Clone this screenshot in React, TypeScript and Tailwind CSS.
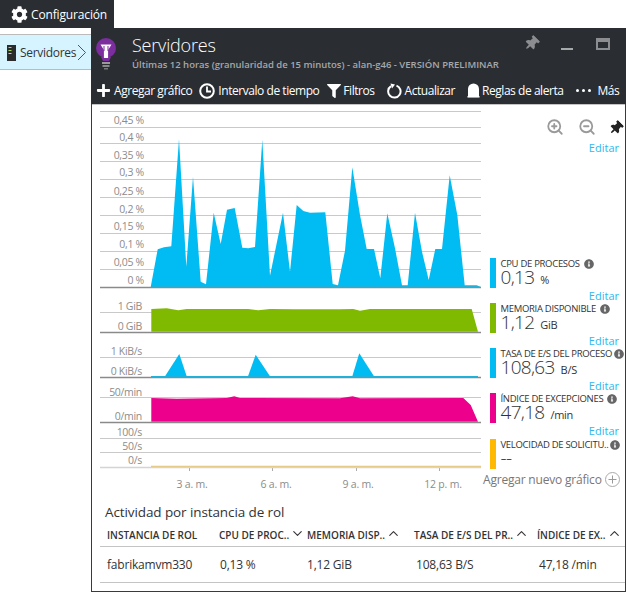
import React from "react";
import { FaCog, FaPlus, FaFilter, FaThumbtack, FaInfoCircle } from "react-icons/fa";
import { ZoomIn, ZoomOut, ChevronDown, ChevronUp } from "lucide-react";

const z3 = (p: number[][]) => p.map(([x, y]) => [100 + x / 3, 105 + y / 3]);
const z4 = (p: number[][]) => p.map(([x, y]) => [340 + x / 3, 105 + y / 3]);
const z5 = (p: number[][]) => p.map(([x, y]) => [100 + x / 3, 285 + y / 3]);
const z6 = (p: number[][]) => p.map(([x, y]) => [340 + x / 3, 285 + y / 3]);
const pts = (p: number[][]) => p.map(([x, y]) => `${x.toFixed(1)},${y.toFixed(1)}`).join(" ");

const cpu = [
  ...z3([[152,546],[173,433],[192,427],[214,424],[237,102],[259,485],[279,215],[302,530],[318,538],[341,323],[362,417],[381,314],[404,309],[427,428],[445,430],[465,426],[487,104],[510,512],[549,323],[570,500],[590,300],[610,318],[630,323],[676,322],[698,537],[714,541],[735,437],[757,187]]),
  ...z4([[60,330],[80,432],[102,432],[121,520],[142,325],[165,430],[186,541],[203,541],[225,323],[246,440],[266,525],[286,432],[306,432],[329,211],[352,330],[374,541],[410,541],[423,546]]),
];
const mem = [
  ...z5([[154,140],[154,72],[200,70],[235,76],[260,72],[445,72],[475,76],[510,72],[585,73],[720,73]]),
  ...z6([[40,72],[60,77],[90,72],[395,72],[414,140]]),
];
const exc = [
  ...z5([[154,410],[154,339],[230,341],[380,339],[403,334],[420,339],[720,340]]),
  ...z6([[38,334],[60,340],[370,339],[392,360],[414,410]]),
];
const tris = [
  z5([[195,274],[238,207],[260,274]]),
  z5([[444,274],[467,209],[510,274]]),
  z6([[37,274],[58,205],[102,274]]),
];

const GRID = "#c9c9c9";
const LABEL = "#8c8c8c";

function Chart({ y0, y1, grid, axis, axisColor = "#8a8a8a", labelX = 142, labels, children }: { y0: number; y1: number; grid: number[]; axis: number; axisColor?: string; labelX?: number; labels: [string, number][]; children?: React.ReactNode }) {
  return (
    <svg width={382} height={y1 - y0} viewBox={`100 ${y0} 382 ${y1 - y0}`} className="block shrink-0">
      {grid.map((y) => (
        <line key={y} x1={100} x2={481} y1={y} y2={y} stroke={GRID} strokeWidth={1} />
      ))}
      {children}
      <line x1={100} x2={481} y1={axis} y2={axis} stroke={axisColor} strokeWidth={1.5} />
      {labels.map(([t, y]) => (
        <text key={t} x={labelX} y={y} textAnchor="end" fontSize={10.5} fill={LABEL} fontFamily="'Open Sans', sans-serif" letterSpacing="-0.3">
          {t}
        </text>
      ))}
    </svg>
  );
}

function Charts() {
  return (
    <div className="flex flex-col">
      <Chart
        y0={106}
        y1={289}
        grid={[111.5, 127.5, 143.5, 161.5, 179.5, 197.5, 215.5, 233.5, 251.5, 269.5]}
        axis={287.5}
        labelX={144}
        labels={[["0,45 %", 123.5], ["0,4 %", 141], ["0,35 %", 159], ["0,3 %", 176], ["0,25 %", 194.5], ["0,2 %", 212.5], ["0,15 %", 230], ["0,1 %", 248], ["0,05 %", 266], ["0 %", 284]]}
      >
        <polygon points={pts(cpu)} fill="#00bcf2" />
      </Chart>
      <Chart y0={289} y1={334} grid={[312.5]} axis={332.5} labels={[["1 GiB", 309.5], ["0 GiB", 329.5]]}>
        <polygon points={pts(mem)} fill="#7fba00" />
      </Chart>
      <Chart y0={334} y1={379} grid={[357.5]} axis={377.5} labels={[["1 KiB/s", 354.5], ["0 KiB/s", 374.5]]}>
        {tris.map((t, i) => (
          <polygon key={i} points={pts(t)} fill="#00bcf2" />
        ))}
        <line x1={151} x2={478} y1={376.5} y2={376.5} stroke="#00bcf2" strokeWidth={1} />
      </Chart>
      <Chart y0={379} y1={424} grid={[397.5]} axis={422.5} labels={[["50/min", 395.5], ["0/min", 419.5]]}>
        <polygon points={pts(exc)} fill="#ec008c" />
      </Chart>
      <Chart y0={424} y1={492} grid={[438.5, 452.5]} axis={467.5} axisColor="#d4d4d4" labels={[["100/s", 435.5], ["50/s", 449.5], ["0/s", 464]]}>
        <line x1={151} x2={481} y1={466.5} y2={466.5} stroke="#ecc76e" strokeWidth={1.5} />
        {[189.5, 272.5, 356.5, 439.5].map((x) => (
          <line key={x} x1={x} x2={x} y1={467} y2={471} stroke="#aaa" strokeWidth={1} />
        ))}
        {([["3 a. m.", 192], ["6 a. m.", 276], ["9 a. m.", 358], ["12 p. m.", 443]] as [string, number][]).map(([t, x]) => (
          <text key={t} x={x} y={488} textAnchor="middle" fontSize={10.5} fill={LABEL} fontFamily="'Open Sans', sans-serif" letterSpacing="-0.2">
            {t}
          </text>
        ))}
      </Chart>
    </div>
  );
}

function Editar({ h = "h-[15px]" }: { h?: string }) {
  return <div className={`${h} flex items-center justify-end pb-[1px] pr-[6px] text-[11px] leading-none text-[#2bb8ee]`}>Editar</div>;
}

function Metric({ color, title, value, unit, icon = "ml-1", unitGap = "ml-[6px]" }: { color: string; title: string; value: string; unit: string; icon?: string; unitGap?: string }) {
  return (
    <div className="flex h-[30px] pl-[8px]">
      <div className="h-[30px] w-[5.5px] shrink-0" style={{ background: color }} />
      <div className="ml-[5px] flex min-w-0 flex-col">
        <div className="flex h-[11px] items-center whitespace-nowrap text-[9.5px] leading-none tracking-[-0.3px] text-[#333]">
          <span>{title}</span>
          <FaInfoCircle className={`${icon} shrink-0 text-[#666]`} size={10} />
        </div>
        <div className="-mt-[1px] flex h-[18px] items-baseline whitespace-nowrap leading-none text-[#333]">
          <span className="text-[19px] font-light tracking-[-0.7px]">{value}</span>
          <span className={`${unitGap} text-[11px] tracking-[-0.3px]`}>{unit}</span>
        </div>
      </div>
    </div>
  );
}

function Legend() {
  return (
    <div className="flex w-[143px] flex-col">
      <div className="flex h-[30px] items-end justify-end">
        <ZoomIn size={18} strokeWidth={2.4} className="text-[#9a9a9a]" />
        <ZoomOut size={18} strokeWidth={2.4} className="ml-[14px] text-[#9a9a9a]" />
        <FaThumbtack size={14} className="mb-[1px] ml-[13px] mr-[2px] rotate-45 text-[#222]" />
      </div>
      <div className="h-[122px] pt-[4px]">
        <Editar />
      </div>
      <Metric color="#00bcf2" title="CPU DE PROCESOS" value="0,13" unit="%" />
      <Editar />
      <Metric color="#7fba00" title="MEMORIA DISPONIBLE" value="1,12" unit="GiB" />
      <Editar />
      <Metric color="#00bcf2" title="TASA DE E/S DEL PROCESO" value="108,63" unit="B/S" icon="ml-[2px]" />
      <Editar />
      <Metric color="#ec008c" title="ÍNDICE DE EXCEPCIONES" value="47,18" unit="/min" />
      <Editar h="h-[16px]" />
      <Metric color="#ffb900" title="VELOCIDAD DE SOLICITU.." value="--" unit="" icon="ml-[2px]" />
      <div className="flex h-[21px] items-center whitespace-nowrap pl-[1px] text-[12px] tracking-[-0.2px] text-[#777]">
        <span>Agregar nuevo gráfico</span>
        <svg width="15" height="15" viewBox="0 0 15 15" className="ml-[3px]">
          <circle cx="7.5" cy="7.5" r="7" fill="none" stroke="#aaa" />
          <path d="M7.5 3.5v8M3.5 7.5h8" stroke="#999" />
        </svg>
      </div>
    </div>
  );
}

function Bulb() {
  return (
    <svg width="22" height="33" viewBox="0 0 22 33" className="shrink-0">
      <circle cx="11" cy="11" r="10" fill="#7c2d9e" />
      <path d="M6 20h10l-2 4H8z" fill="#7c2d9e" />
      <path d="M5.5 7.5h11l-3.4 5.5v8h-4.2v-8z" fill="#fff" />
      <path d="M9 9v5M13 9v5" stroke="#7c2d9e" strokeWidth="1" />
      <rect x="7" y="25" width="8" height="2" fill="#9a9a9a" />
      <rect x="7.5" y="28" width="7" height="2" fill="#8a8a8a" />
      <rect x="9" y="31" width="4" height="1.5" fill="#777" />
    </svg>
  );
}

function Tool({ icon, label, cls }: { icon: React.ReactNode; label: string; cls: string }) {
  return (
    <div className={`flex items-center ${cls}`}>
      {icon}
      <span className="whitespace-nowrap text-[12px] tracking-[-0.45px] text-white">{label}</span>
    </div>
  );
}

function Header() {
  return (
    <div className="h-[76px] bg-[#2a2e33]">
      <div className="flex h-[49px]">
        <div className="ml-[4px] mt-[9px]">
          <Bulb />
        </div>
        <div className="ml-[15px] min-w-0 pt-[4px]">
          <div className="text-[18px] font-light leading-[26px] tracking-[-0.2px] text-white">Servidores</div>
          <div className="whitespace-nowrap text-[9.5px] font-semibold leading-[14px] tracking-[0px] text-[#a6a8aa]">
            Últimas 12 horas (granularidad de 15 minutos) - alan-g46 - VERSIÓN PRELIMINAR
          </div>
        </div>
        <div className="ml-auto flex items-start pr-[16px] pt-[8px]">
          <FaThumbtack size={15} className="rotate-45 text-[#8b8d90]" />
          <div className="ml-[22px] mt-[12px] h-[2px] w-[12px] bg-[#a6a8aa]" />
          <div className="ml-[23px] mt-[2px] h-[12px] w-[14px] border-2 border-t-[4px] border-[#8b8d90]" />
        </div>
      </div>
      <div className="flex h-[27px] items-center">
        <Tool cls="ml-[5px]" icon={<FaPlus size={15} className="mr-[3px] text-white" />} label="Agregar gráfico" />
        <Tool
          cls="ml-[7px]"
          icon={
            <svg width="16" height="16" viewBox="0 0 16 16" className="mr-[3px]">
              <circle cx="8" cy="8" r="6.8" fill="none" stroke="#fff" strokeWidth="2" />
              <path d="M8 3.5V8.5H12" fill="none" stroke="#fff" strokeWidth="1.8" />
            </svg>
          }
          label="Intervalo de tiempo"
        />
        <Tool cls="ml-[8px]" icon={<FaFilter size={14} className="mr-[2px] text-white" />} label="Filtros" />
        <Tool
          cls="ml-[11px]"
          icon={
            <svg width="16" height="16" viewBox="0 0 16 16" className="mr-[3px]">
              <path d="M5 3.2A6.2 6.2 0 1 0 10.5 2.6" fill="none" stroke="#fff" strokeWidth="2" />
              <path d="M4.5 0.5L9 1.5 6 5.5z" fill="#fff" />
            </svg>
          }
          label="Actualizar"
        />
        <Tool
          cls="ml-[12px]"
          icon={
            <svg width="13" height="16" viewBox="0 0 13 16" className="mr-[2px]">
              <path d="M1 13V6a5.5 5.5 0 0 1 11 0v7l1 1H0z" fill="#fff" />
              <path d="M0.5 14.5h12" stroke="#e58a7a" strokeWidth="1" />
            </svg>
          }
          label="Reglas de alerta"
        />
        <div className="ml-[13px] flex items-center">
          <span className="mr-[3px] h-[3px] w-[3px] rounded-full bg-white" />
          <span className="mr-[3px] h-[3px] w-[3px] rounded-full bg-white" />
          <span className="mr-[6px] h-[3px] w-[3px] rounded-full bg-white" />
          <span className="whitespace-nowrap text-[12px] tracking-[-0.45px] text-white">Más</span>
        </div>
      </div>
    </div>
  );
}

function Th({ w, label, up, down }: { w: string; label: string; up?: boolean; down?: boolean }) {
  return (
    <div className={`flex ${w} items-center whitespace-nowrap pb-[1px] text-[10px] font-semibold tracking-[0px] text-[#333]`}>
      <span>{label}</span>
      {up && <ChevronUp size={15} strokeWidth={1.8} className="-mt-[4px] ml-[1px] shrink-0 text-[#333]" />}
      {down && <ChevronDown size={15} strokeWidth={1.8} className="-mt-[4px] ml-[1px] shrink-0 text-[#333]" />}
    </div>
  );
}

function Table() {
  return (
    <div className="pl-[8px]">
      <div className="h-[33px] pl-[5px] pt-[11px] text-[13.5px] leading-[18px] tracking-[-0.1px] text-[#333]">Actividad por instancia de rol</div>
      <div className="flex h-[22px] items-center border-b border-[#c4c4c4] pl-[7px]">
        <Th w="w-[112px]" label="INSTANCIA DE ROL" />
        <Th w="w-[88px]" label="CPU DE PROC.." down />
        <Th w="w-[107px]" label="MEMORIA DISP.." up />
        <Th w="w-[123px]" label="TASA DE E/S DEL PR.." up />
        <Th w="w-[88px]" label="ÍNDICE DE EX.." up />
      </div>
      <div className="flex h-[36px] items-center border-b border-[#c4c4c4] pl-[7px] text-[12px] tracking-[-0.2px] text-[#333]">
        <div className="w-[113px]">fabrikamvm330</div>
        <div className="w-[87px]">0,13 %</div>
        <div className="w-[109px]">1,12 GiB</div>
        <div className="w-[123px]">108,63 B/S</div>
        <div>47,18 /min</div>
      </div>
    </div>
  );
}

export default function App() {
  return (
    <div className="h-[594px] w-[626px] overflow-hidden bg-white font-['Open_Sans',sans-serif]">
      <div className="flex h-[28px] w-[114px] items-center bg-[#2a2e33] pl-[11px] pt-[1px] text-white">
        <FaCog size={17} className="shrink-0" />
        <span className="ml-[3px] whitespace-nowrap text-[12px] tracking-[-0.15px]">Configuración</span>
      </div>
      <div className="flex items-start">
        <div className="mt-[6px] flex h-[36px] w-[91px] shrink-0 items-center border-y border-[#bbb] bg-[#d6f4ff] pl-[7px] pt-[1px]">
          <svg width="9" height="16" viewBox="0 0 9 16" className="shrink-0">
            <rect width="9" height="16" fill="#2b2b2b" />
            <rect x="1.5" y="2" width="3" height="1" fill="#9fd85a" />
            <rect x="1.5" y="5" width="3" height="1" fill="#9fd85a" />
            <rect x="1.5" y="8" width="3" height="1" fill="#d8d860" />
          </svg>
          <span className="ml-[4px] whitespace-nowrap text-[12px] tracking-[-0.3px] text-[#333]">Servidores</span>
          <svg width="10" height="17" viewBox="0 0 10 17" className="ml-[1px] shrink-0">
            <path d="M1 1l7.5 7.5L1 16" fill="none" stroke="#555" strokeWidth="1" />
          </svg>
        </div>
        <div className="h-[564px] w-[535px] shrink-0 border-x border-b border-[#3a3a3a]">
          <div className="-mx-px">
            <Header />
          </div>
          <div className="border-t border-[#c4c4c4] pt-[1px]">
            <div className="flex pl-[8px]">
              <Charts />
              <Legend />
            </div>
            <Table />
          </div>
        </div>
      </div>
    </div>
  );
}
